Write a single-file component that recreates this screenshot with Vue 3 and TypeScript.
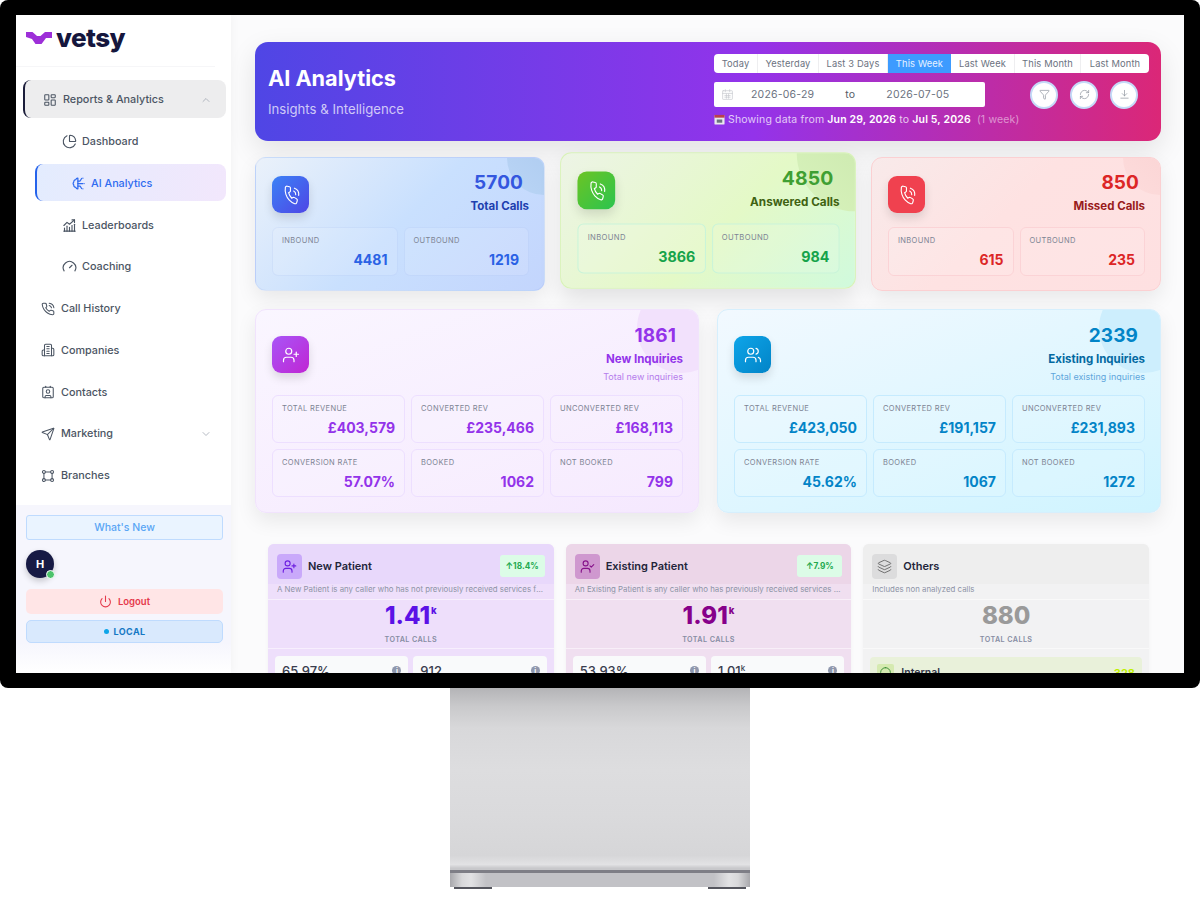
<script setup lang="ts">
import { h } from 'vue'

const paths: Record<string, string[]> = {
  grid: ['M4 3h5a1 1 0 0 1 1 1v7a1 1 0 0 1-1 1H4a1 1 0 0 1-1-1V4a1 1 0 0 1 1-1z', 'M15 3h5a1 1 0 0 1 1 1v3a1 1 0 0 1-1 1h-5a1 1 0 0 1-1-1V4a1 1 0 0 1 1-1z', 'M15 12h5a1 1 0 0 1 1 1v7a1 1 0 0 1-1 1h-5a1 1 0 0 1-1-1v-7a1 1 0 0 1 1-1z', 'M4 16h5a1 1 0 0 1 1 1v3a1 1 0 0 1-1 1H4a1 1 0 0 1-1-1v-3a1 1 0 0 1 1-1z'],
  pie: ['M21 12c.552 0 1.005-.449.95-.998a10 10 0 0 0-8.953-8.951c-.55-.055-.998.398-.998.95v8a1 1 0 0 0 1 1z', 'M21.21 15.89A10 10 0 1 1 8 2.83'],
  brain: ['M11 3.5a3 3 0 0 0-3.2 2.3A3.2 3.2 0 0 0 4.5 9.5a3.4 3.4 0 0 0 0 5 3.2 3.2 0 0 0 3.3 3.7A3 3 0 0 0 11 20.5z', 'M11 8h3.5l2.5-4', 'M11 12h8', 'M11 16h3.5l2.5 4', 'M19 3.5h.01', 'M21 12h.01', 'M19 20.5h.01'],
  chart: ['M3 21h18', 'M4 21v-5', 'M8 21v-8', 'M12 21v-6', 'M16 21v-9', 'M20 21V10', 'M3 12l5-5 4 3 8-7', 'M16 3h4v4'],
  gauge: ['m12 14 4-4', 'M3.34 19a10 10 0 1 1 17.32 0'],
  phone: ['M14.05 2a9 9 0 0 1 8 7.94', 'M14.05 6A5 5 0 0 1 18 10', 'M22 16.92v3a2 2 0 0 1-2.18 2 19.79 19.79 0 0 1-8.63-3.07 19.5 19.5 0 0 1-6-6 19.79 19.79 0 0 1-3.07-8.67A2 2 0 0 1 4.11 2h3a2 2 0 0 1 2 1.72 12.84 12.84 0 0 0 .7 2.81 2 2 0 0 1-.45 2.11L8.09 9.91a16 16 0 0 0 6 6l1.27-1.27a2 2 0 0 1 2.11-.45 12.84 12.84 0 0 0 2.81.7A2 2 0 0 1 22 16.92z'],
  building: ['M6 22V4a2 2 0 0 1 2-2h8a2 2 0 0 1 2 2v18z', 'M6 12H4a2 2 0 0 0-2 2v6a2 2 0 0 0 2 2h2', 'M18 9h2a2 2 0 0 1 2 2v9a2 2 0 0 1-2 2h-2', 'M10 6h4', 'M10 10h4', 'M10 14h4', 'M10 18h4'],
  contact: ['M16 2v2', 'M8 2v2', 'M7 22v-2a2 2 0 0 1 2-2h6a2 2 0 0 1 2 2v2', 'M12 8a3 3 0 1 1 0 6 3 3 0 0 1 0-6z', 'M5 4h14a2 2 0 0 1 2 2v14a2 2 0 0 1-2 2H5a2 2 0 0 1-2-2V6a2 2 0 0 1 2-2z'],
  send: ['M14.536 21.686a.5.5 0 0 0 .937-.024l6.5-19a.496.496 0 0 0-.635-.635l-19 6.5a.5.5 0 0 0-.024.937l7.93 3.18a2 2 0 0 1 1.112 1.11z', 'm21.854 2.147-10.94 10.939'],
  branch: ['M5 2.5a2.5 2.5 0 1 1 0 5 2.5 2.5 0 0 1 0-5z', 'M19 2.5a2.5 2.5 0 1 1 0 5 2.5 2.5 0 0 1 0-5z', 'M5 16.5a2.5 2.5 0 1 1 0 5 2.5 2.5 0 0 1 0-5z', 'M19 16.5a2.5 2.5 0 1 1 0 5 2.5 2.5 0 0 1 0-5z', 'M7.5 5h9', 'M7.5 19h9', 'M5 7.5v9', 'M19 7.5v9'],
  up: ['m6 15 6-6 6 6'],
  down: ['m6 9 6 6 6-6'],
  power: ['M12 2v10', 'M18.4 6.6a9 9 0 1 1-12.77.04'],
  filter: ['M10 20a1 1 0 0 0 .553.895l2 1A1 1 0 0 0 14 21v-7a2 2 0 0 1 .517-1.341L21.74 4.67A1 1 0 0 0 21 3H3a1 1 0 0 0-.742 1.67l7.225 7.989A2 2 0 0 1 10 14z'],
  refresh: ['M3 12a9 9 0 0 1 9-9 9.75 9.75 0 0 1 6.74 2.74L21 8', 'M21 3v5h-5', 'M21 12a9 9 0 0 1-9 9 9.75 9.75 0 0 1-6.74-2.74L3 16', 'M8 16H3v5'],
  download: ['M12 3v12', 'm7 10 5 5 5-5', 'M4 20h16'],
  userplus: ['M16 21v-2a4 4 0 0 0-4-4H6a4 4 0 0 0-4 4v2', 'M9 3a4 4 0 1 1 0 8 4 4 0 0 1 0-8z', 'M19 8v6', 'M22 11h-6'],
  users: ['M16 21v-2a4 4 0 0 0-4-4H6a4 4 0 0 0-4 4v2', 'M9 3a4 4 0 1 1 0 8 4 4 0 0 1 0-8z', 'M22 21v-2a4 4 0 0 0-3-3.87', 'M16 3.13a4 4 0 0 1 0 7.75'],
  usercheck: ['M16 21v-2a4 4 0 0 0-4-4H6a4 4 0 0 0-4 4v2', 'M9 3a4 4 0 1 1 0 8 4 4 0 0 1 0-8z', 'm16 11 2 2 4-4'],
  layers: ['M12.83 2.18a2 2 0 0 0-1.66 0L2.6 6.08a1 1 0 0 0 0 1.83l8.58 3.91a2 2 0 0 0 1.66 0l8.58-3.9a1 1 0 0 0 0-1.83z', 'M2 12a1 1 0 0 0 .58.91l8.6 3.91a2 2 0 0 0 1.65 0l8.58-3.9A1 1 0 0 0 22 12', 'M2 17a1 1 0 0 0 .58.91l8.6 3.91a2 2 0 0 0 1.65 0l8.58-3.9A1 1 0 0 0 22 17'],
  circle: ['M12 3a9 9 0 1 1 0 18 9 9 0 0 1 0-18z'],
  calendar: ['M4 5h16a1 1 0 0 1 1 1v14a1 1 0 0 1-1 1H4a1 1 0 0 1-1-1V6a1 1 0 0 1 1-1z', 'M3 10h18', 'M8 3v4', 'M16 3v4', 'M7 14h10', 'M7 17h10', 'M10 11v8', 'M14 11v8'],
}

const Ico = (props: { n: string; s: number; w?: number }) =>
  h(
    'svg',
    {
      viewBox: '0 0 24 24',
      width: props.s,
      height: props.s,
      fill: 'none',
      stroke: 'currentColor',
      'stroke-width': props.w ?? 2,
      'stroke-linecap': 'round',
      'stroke-linejoin': 'round',
    },
    paths[props.n].map((d) => h('path', { d })),
  )
Ico.props = ['n', 's', 'w']

const subNav = [
  { label: 'Dashboard', icon: 'pie' },
  { label: 'AI Analytics', icon: 'brain', active: true },
  { label: 'Leaderboards', icon: 'chart' },
  { label: 'Coaching', icon: 'gauge' },
]
const topNav = [
  { label: 'Call History', icon: 'phone' },
  { label: 'Companies', icon: 'building' },
  { label: 'Contacts', icon: 'contact' },
  { label: 'Marketing', icon: 'send', more: true },
  { label: 'Branches', icon: 'branch' },
]
const tabs = ['Today', 'Yesterday', 'Last 3 Days', 'This Week', 'Last Week', 'This Month', 'Last Month']
const callCards = [
  { tone: 'blue', num: '5700', label: 'Total Calls', inb: '4481', out: '1219' },
  { tone: 'green', num: '4850', label: 'Answered Calls', inb: '3866', out: '984' },
  { tone: 'red', num: '850', label: 'Missed Calls', inb: '615', out: '235' },
]
const inquiryCards = [
  {
    tone: 'purple', icon: 'userplus', num: '1861', label: 'New Inquiries', sub: 'Total new inquiries',
    metrics: [['Total Revenue', '£403,579'], ['Converted Rev', '£235,466'], ['Unconverted Rev', '£168,113'], ['Conversion Rate', '57.07%'], ['Booked', '1062'], ['Not Booked', '799']],
  },
  {
    tone: 'sky', icon: 'users', num: '2339', label: 'Existing Inquiries', sub: 'Total existing inquiries',
    metrics: [['Total Revenue', '£423,050'], ['Converted Rev', '£191,157'], ['Unconverted Rev', '£231,893'], ['Conversion Rate', '45.62%'], ['Booked', '1067'], ['Not Booked', '1272']],
  },
]
const patients = [
  { tone: 'violet', icon: 'userplus', title: 'New Patient', badge: '18.4%', desc: 'A New Patient is any caller who has not previously received services from this practice', big: '1.41', unit: 'k', a: '65.97%', b: '912', bUnit: '' },
  { tone: 'plum', icon: 'usercheck', title: 'Existing Patient', badge: '7.9%', desc: 'An Existing Patient is any caller who has previously received services from this practice', big: '1.91', unit: 'k', a: '53.93%', b: '1.01', bUnit: 'k' },
]
</script>

<template>
  <div class="page">
    <div class="monitor">
      <div class="screen">
        <aside class="sidebar">
          <div class="logo">
            <svg class="mark" viewBox="0 0 26 14" width="26" height="14">
              <path d="M0 1H6.500L11 5H14.500L19 1H26V7H20L15.500 13H9.500L6 8L0 6Z" fill="#9d2fd8" />
            </svg>
            <span class="word">vetsy</span>
          </div>
          <nav class="nav">
            <div class="item group">
              <Ico n="grid" :s="14" :w="1.8" />
              <span class="grow">Reports &amp; Analytics</span>
              <Ico class="chev" n="up" :s="12" :w="1.5" />
            </div>
            <div v-for="s in subNav" :key="s.label" class="item sub" :class="{ active: s.active }">
              <Ico :n="s.icon" :s="15" :w="s.active ? 2 : 1.8" />
              <span>{{ s.label }}</span>
            </div>
            <div v-for="t in topNav" :key="t.label" class="item top">
              <Ico :n="t.icon" :s="14" :w="1.8" />
              <span class="grow">{{ t.label }}</span>
              <Ico v-if="t.more" class="chev" n="down" :s="12" :w="1.5" />
            </div>
          </nav>
          <div class="foot">
            <div class="whats">What's New</div>
            <div class="avatar">H<i class="online"></i></div>
            <div class="logout"><Ico n="power" :s="13" />Logout</div>
            <div class="local"><i class="dot"></i>LOCAL</div>
          </div>
        </aside>

        <main class="main">
          <section class="hero">
            <div class="hero-left">
              <h1>AI Analytics</h1>
              <p>Insights &amp; Intelligence</p>
            </div>
            <div class="hero-right">
              <div class="tabs">
                <span v-for="t in tabs" :key="t" class="tab" :class="{ on: t === 'This Week' }">{{ t }}</span>
              </div>
              <div class="controls">
                <div class="range">
                  <Ico class="cal" n="calendar" :s="13" :w="1.2" />
                  <span class="d1">2026-06-29</span>
                  <span class="to">to</span>
                  <span class="d2">2026-07-05</span>
                </div>
                <div class="round"><Ico n="filter" :s="11" :w="1.5" /></div>
                <div class="round"><Ico n="refresh" :s="11" :w="1.5" /></div>
                <div class="round"><Ico n="download" :s="11" :w="1.5" /></div>
              </div>
              <div class="showing">
                <svg class="emoji" viewBox="0 0 12 12" width="11" height="11">
                  <rect x="0.500" y="1" width="11" height="10.500" rx="1" fill="#e8e8ec" />
                  <rect x="0.500" y="1" width="11" height="3" fill="#b9414d" />
                  <rect x="3" y="6" width="6" height="3.500" fill="#6b7280" />
                </svg>
                Showing data from <b>Jun 29, 2026</b> to <b>Jul 5, 2026</b> <span class="wk">(1 week)</span>
              </div>
            </div>
          </section>

          <section class="row-calls">
            <article v-for="c in callCards" :key="c.tone" class="stat" :class="c.tone">
              <i class="blob"></i>
              <div class="head">
                <div class="ic"><Ico n="phone" :s="18" :w="1.5" class="tilt" /></div>
                <div class="titles">
                  <div class="num">{{ c.num }}</div>
                  <div class="lab">{{ c.label }}</div>
                </div>
              </div>
              <div class="pair">
                <div class="cell"><div class="k">Inbound</div><div class="v">{{ c.inb }}</div></div>
                <div class="cell"><div class="k">Outbound</div><div class="v">{{ c.out }}</div></div>
              </div>
            </article>
          </section>

          <section class="row-inq">
            <article v-for="c in inquiryCards" :key="c.tone" class="stat big" :class="c.tone">
              <i class="blob"></i>
              <div class="head">
                <div class="ic"><Ico :n="c.icon" :s="18" :w="1.6" /></div>
                <div class="titles">
                  <div class="num">{{ c.num }}</div>
                  <div class="lab">{{ c.label }}</div>
                  <div class="desc">{{ c.sub }}</div>
                </div>
              </div>
              <div class="six">
                <div v-for="m in c.metrics" :key="m[0]" class="cell"><div class="k">{{ m[0] }}</div><div class="v">{{ m[1] }}</div></div>
              </div>
            </article>
          </section>

          <section class="row-pat">
            <article v-for="p in patients" :key="p.title" class="pat" :class="p.tone">
              <header class="ph">
                <div class="pi"><Ico :n="p.icon" :s="15" :w="1.8" /></div>
                <span class="pt">{{ p.title }}</span>
                <span class="badge">↑{{ p.badge }}</span>
              </header>
              <div class="pd">{{ p.desc }}</div>
              <div class="pn"><span class="bn">{{ p.big }}<sup>{{ p.unit }}</sup></span><span class="tc">TOTAL CALLS</span></div>
              <div class="ps">
                <div class="pc"><span>{{ p.a }}</span><i class="info">i</i></div>
                <div class="pc"><span>{{ p.b }}<sup v-if="p.bUnit">{{ p.bUnit }}</sup></span><i class="info">i</i></div>
              </div>
            </article>
            <article class="pat gray">
              <header class="ph">
                <div class="pi"><Ico n="layers" :s="15" :w="1.5" /></div>
                <span class="pt">Others</span>
              </header>
              <div class="pd">Includes non analyzed calls</div>
              <div class="pn"><span class="bn">880</span><span class="tc">TOTAL CALLS</span></div>
              <div class="internal">
                <div class="ii"><Ico n="circle" :s="13" :w="1.8" /></div>
                <span class="in">Internal</span>
                <span class="iv">328</span>
              </div>
            </article>
          </section>
        </main>
      </div>
    </div>
    <div class="stand">
      <div class="neck"></div>
      <div class="base"></div>
      <div class="feet"><i></i><i></i></div>
    </div>
  </div>
</template>

<style>
html, body { margin: 0; background: #fff; }
</style>

<style scoped>
* { box-sizing: border-box; }
.page { width: 1200px; height: 901px; background: #fff; display: flex; flex-direction: column; align-items: center; font-family: Inter, "Liberation Sans", sans-serif; overflow: hidden; }
.monitor { width: 1200px; height: 688px; background: #000; border-radius: 8px; padding: 15px 16px; flex: none; }
.screen { width: 1168px; height: 658px; display: flex; overflow: hidden; background: #fbfbfc; }

/* stand */
.stand { width: 300px; height: 201px; display: flex; flex-direction: column; flex: none; }
.neck { height: 182px; background: linear-gradient(180deg, #b4b4b7 0%, #c9c9cb 10%, #d8d8da 22%, #dddddf 45%, #dadadc 70%, #d6d6d8 92%, #e2e2e4 97%, #c8c8cb 99%); }
.base { height: 17px; border-top: 3px solid #7e7e86; background: linear-gradient(90deg, #a8a8ac 0%, #d8d8da 4%, #e2e2e4 7%, #c2c2c6 12%, #c2c2c6 88%, #e2e2e4 93%, #d8d8da 96%, #a8a8ac 100%); }
.feet { height: 2px; display: flex; justify-content: space-between; padding: 0 4px; }
.feet i { width: 38px; background: #55565e; }

/* sidebar */
.sidebar { width: 215px; flex: none; background: #fff; display: flex; flex-direction: column; box-shadow: 2px 0 8px rgba(0, 0, 0, .03); }
.logo { height: 52px; margin-bottom: 13px; margin-right: 16px; display: flex; align-items: center; gap: 4px; padding: 0 0 6px 10px; border-bottom: 1px solid #f6f6f8; }
.word { font-size: 26px; font-weight: 800; letter-spacing: -.6px; color: #15163d; line-height: 1; }
.nav { display: flex; flex-direction: column; gap: 4px; padding: 0 5px 0 7px; }
.item { height: 37.75px; padding-top: 2px; display: flex; align-items: center; gap: 6px; font-size: 10.8px; font-weight: 500; color: #4b5563; border-radius: 8px; flex: none; }
.grow { flex: 1; }
.chev { color: #9ca3af; margin-right: 14px; }
.group { padding-left: 18px; gap: 6px; background: #ededee; border-left: 2px solid #1b1d3a; }
.sub { margin-left: 12px; padding-left: 27px; gap: 5px; }
.sub.active { padding-left: 34px; gap: 5px; color: #2f6bf0; background: linear-gradient(100deg, #e3ecfe, #f2e7fc); border-left: 2px solid #2563eb; }
.top { padding-left: 18px; }
.foot { margin-top: auto; height: 168px; padding: 10px 8px 0 10px; display: flex; flex-direction: column; background: linear-gradient(180deg, #f6f6fd 0%, #f6f6fd 82%, #fff 100%); }
.whats { height: 25px; background: #eaf4ff; border: 1px solid #bfdbfe; border-radius: 3px; display: flex; align-items: center; justify-content: center; font-size: 10.500px; font-weight: 500; color: #5aa6f5; flex: none; }
.avatar { width: 28px; height: 28px; margin-top: 10px; border-radius: 50%; background: #171a44; color: #fff; font-size: 11px; font-weight: 700; display: flex; align-items: center; justify-content: center; position: relative; box-shadow: 0 3px 6px rgba(0, 0, 0, .2); flex: none; }
.online { position: absolute; right: -1px; bottom: -1px; width: 9px; height: 9px; border-radius: 50%; background: #4cc36b; border: 1.5px solid #fff; }
.logout { height: 25px; margin-top: 11px; border-radius: 5px; background: #ffe5e6; color: #e5394b; display: flex; align-items: center; justify-content: center; gap: 6px; font-size: 9.500px; font-weight: 600; flex: none; }
.local { height: 23px; margin-top: 6px; border-radius: 5px; background: #d9e9fd; border: 1px solid #bfdbfe; color: #1477c4; display: flex; align-items: center; justify-content: center; gap: 5px; font-size: 9px; font-weight: 700; letter-spacing: .4px; flex: none; }
.dot { width: 5px; height: 5px; border-radius: 50%; background: #0ea5e9; }

/* main */
.main { flex: 1; min-width: 0; padding: 27px 23px 0 24px; display: flex; flex-direction: column; overflow: hidden; }
.hero { height: 99px; flex: none; border-radius: 13px; background: linear-gradient(90deg, #4f46e5 0%, #9333ea 55%, #db2777 100%); box-shadow: 0 10px 28px rgba(0, 0, 0, .1); display: flex; justify-content: space-between; padding: 12px 12px 0 13px; color: #fff; }
h1 { margin: 10px 0 0; font-size: 21.7px; line-height: 28px; font-weight: 700; }
.hero-left p { margin: 8px 0 0; font-size: 13.200px; line-height: 18px; color: rgba(255, 255, 255, .72); }
.hero-right { width: 435px; display: flex; flex-direction: column; }
.tabs { height: 19px; display: grid; grid-template-columns: 44px 61px 69px 63px 64px 66px 68px; background: #fff; border-radius: 4px; overflow: hidden; }
.tab { display: flex; align-items: center; justify-content: center; font-size: 9.300px; letter-spacing: .15px; color: #6b7280; border-right: 1px solid #eeeef0; white-space: nowrap; }
.tab:last-child { border-right: 0; }
.tab.on { background: #3d9bff; color: #e8f3ff; border-right: 0; }
.controls { display: flex; align-items: center; margin-top: 9px; height: 25px; }
.range { width: 271px; height: 25px; background: #fff; border-radius: 2px; display: flex; align-items: center; font-size: 10.500px; letter-spacing: .2px; color: #6b7280; padding-left: 7px; margin-right: 45px; flex: none; }
.cal { color: #c4c6cc; }
.d1 { margin-left: 17px; }
.to { margin-left: 31px; color: #555b66; }
.d2 { margin-left: 31px; }
.round { width: 28px; height: 28px; border-radius: 50%; background: #fff; border: 2px solid #c5daf8; color: #8c929c; display: flex; align-items: center; justify-content: center; margin-right: 12px; flex: none; }
.showing { margin-top: 6px; font-size: 10.500px; line-height: 14px; color: rgba(255, 255, 255, .75); white-space: pre-wrap; letter-spacing: .15px; }
.showing b { color: #fff; font-weight: 600; }
.emoji { vertical-align: -2px; }
.wk { margin-left: 3px; color: rgba(255, 255, 255, .5); }

.row-calls { display: grid; grid-template-columns: repeat(3, 1fr); gap: 18px; margin-top: 16px; flex: none; }
.row-inq { display: grid; grid-template-columns: 1fr 1fr; gap: 18px; margin-top: 18px; flex: none; }
.stat { position: relative; overflow: hidden; isolation: isolate; border-radius: 11px; padding: 15px 15px 14px 16px; border: 1px solid transparent; box-shadow: 0 8px 20px rgba(0, 0, 0, .08); }
.blob { position: absolute; top: -37px; right: -37px; width: 74px; height: 74px; border-radius: 50%; z-index: -1; }
.green .blob { top: -57px; right: -57px; width: 114px; height: 114px; }
.big .blob { top: -27px; right: -29px; width: 90px; height: 90px; }
.head { display: flex; justify-content: space-between; align-items: flex-start; margin-bottom: 14px; }
.ic { width: 37px; height: 37px; border-radius: 9px; display: flex; align-items: center; justify-content: center; color: #fff; margin-top: 3px; box-shadow: 0 5px 10px rgba(0, 0, 0, .12); flex: none; }
.tilt { transform: rotate(15deg); }
.titles { text-align: right; }
.num { font-size: 19px; line-height: 20px; font-weight: 700; padding-right: 6px; letter-spacing: .1px; }
.lab { margin-top: 6px; font-size: 11.500px; line-height: 14px; font-weight: 700; }
.desc { margin-top: 5px; font-size: 9px; line-height: 12px; }
.pair { display: grid; grid-template-columns: 1fr 1fr; gap: 6px; }
.cell { height: 49px; border: 1.5px solid; border-radius: 6px; padding: 7px 9px 0; background: rgba(255, 255, 255, .12); }
.k { font-size: 7.500px; line-height: 11px; letter-spacing: .35px; color: #7d8494; text-transform: uppercase; }
.v { margin-top: 5px; text-align: right; font-size: 14px; line-height: 18px; font-weight: 700; }
.big { padding-top: 16px; padding-bottom: 15px; }
.big .num { padding-right: 7px; }
.big .head { margin-bottom: 12px; }
.big .ic { margin-top: 10px; }
.big .cell { height: 48px; }
.six { display: grid; grid-template-columns: repeat(3, 1fr); gap: 6px; }

.blue { background: linear-gradient(135deg, #eaf1fa 0%, #c9e0fe 50%, #c3d5fd 100%); border-color: rgba(120, 150, 220, .12); }
.blue .blob { background: linear-gradient(45deg, #bad5f6, #a8c7ec); }
.blue .ic { background: linear-gradient(135deg, #3b82f6, #4f46e5); }
.blue .num { color: #3457df; }
.blue .lab { color: #1e40af; }
.blue .v { color: #2a62e5; }
.blue .cell { border-color: rgba(100, 140, 230, .1); }
.green { background: linear-gradient(135deg, #edf4e6 0%, #e4f9c7 55%, #d0fadd 100%); border-color: #d8f2b8; transform: translateY(-3.5px) scale(1.02); box-shadow: 0 10px 22px rgba(0, 0, 0, .1); }
.green .blob { background: linear-gradient(45deg, #d8f3bc, #c6e3a8); }
.green .ic { background: linear-gradient(135deg, #6cc424, #2bc44f); }
.green .num { color: #3f9f33; }
.green .lab { color: #3f6212; }
.green .v { color: #16a34a; }
.green .cell { border-color: #c9f4d9; }
.red { background: linear-gradient(135deg, #f8eaea 0%, #fee2e2 45%, #fee0e1 100%); border-color: #fbd0d2; }
.red .blob { background: linear-gradient(45deg, #fddcdc, #f9d0d0); }
.red .ic { background: #f0414f; }
.red .num { color: #dc2626; }
.red .lab { color: #991b1b; }
.red .v { color: #dc2626; }
.red .cell { border-color: #fbd3d6; }
.purple { background: linear-gradient(160deg, #faf6ff 0%, #f5e8fe 100%); border-color: #f1e3fd; }
.purple .blob { background: #f2e1fc; }
.purple .ic { background: linear-gradient(135deg, #a855f7, #c026d3); }
.purple .num, .purple .lab, .purple .v { color: #9333ea; }
.purple .desc { color: #b57cec; }
.purple .cell { border-color: #eddfff; }
.sky { background: linear-gradient(160deg, #f2f9ff 0%, #cff4ff 100%); border-color: #d6effd; }
.sky .blob { background: #cdeefd; }
.sky .ic { background: linear-gradient(135deg, #0ea5e9, #0284c7); }
.sky .num, .sky .v { color: #0284c7; }
.sky .lab { color: #0369a1; }
.sky .desc { color: #5fa6dc; }
.sky .cell { border-color: #c6ebfe; }

.row-pat { display: grid; grid-template-columns: repeat(3, 1fr); gap: 12px; margin: 31px 12px 0 13px; flex: none; }
.pat { border-radius: 6px; height: 180px; box-shadow: 0 1px 4px rgba(0, 0, 0, .04); overflow: hidden; }
.ph { height: 40px; display: flex; align-items: center; padding: 4px 9px 0; gap: 6px; }
.pi { width: 25px; height: 25px; border-radius: 4px; display: flex; align-items: center; justify-content: center; flex: none; }
.pt { flex: 1; font-size: 11px; font-weight: 600; color: #23253a; }
.badge { width: 45px; height: 22px; border-radius: 3px; background: #dcfce7; color: #22a94f; font-size: 8.300px; font-weight: 700; display: flex; align-items: center; justify-content: center; }
.pd { height: 16px; padding: 0 9px; font-size: 7.850px; line-height: 11px; color: #8d93a6; white-space: nowrap; overflow: hidden; text-overflow: ellipsis; border-bottom: 1px solid rgba(255, 255, 255, .5); }
.pn { height: 49px; display: flex; flex-direction: column; align-items: center; border-bottom: 1px solid rgba(255, 255, 255, .5); }
.bn { font-size: 24px; line-height: 28px; font-weight: 800; margin-top: 2px; }
.bn sup { font-size: 9.500px; line-height: 0; vertical-align: 10px; margin-left: 1px; }
.tc { margin-top: 4px; font-size: 7.200px; line-height: 11px; font-weight: 600; letter-spacing: .4px; color: #878da3; }
.ps { display: grid; grid-template-columns: 1fr 1fr; gap: 5px; padding: 7px 7px 0; }
.pc { height: 40px; background: #f9fafb; border-radius: 4px; padding: 7px; display: flex; justify-content: space-between; font-size: 13px; line-height: 16px; font-weight: 500; color: #3a3d4e; }
.pc sup { font-size: 8px; line-height: 0; }
.info { width: 9px; height: 9px; margin-top: 3px; border-radius: 50%; background: #8f97ad; color: #fff; font-size: 7px; line-height: 9px; text-align: center; font-style: normal; font-weight: 700; }
.violet { background: #eedffb; }
.violet .ph { background: #e8d8fb; }
.violet .pi { background: #c9a9fa; color: #6d1fe0; }
.violet .bn { color: #5b11e6; }
.plum { background: #f0dff0; }
.plum .ph { background: #ecd6e8; }
.plum .pi { background: #cf98cf; color: #86128a; }
.plum .bn { color: #86008a; }
.gray { background: #f2f2f3; }
.gray .ph { background: #eeeeee; }
.gray .pi { background: #dcdcdd; color: #6b6b6b; }
.gray .bn { color: #9a9a9a; }
.internal { margin: 8px 7px 0; height: 40px; background: #e9f1da; border-radius: 4px; display: flex; padding: 7px; gap: 7px; }
.ii { width: 17px; height: 17px; display: flex; align-items: center; justify-content: center; background: #d5eab0; color: #3f8f3a; border-radius: 2px; flex: none; }
.in { flex: 1; margin-top: 2px; font-size: 10.500px; font-weight: 600; color: #33374a; line-height: 14px; }
.iv { margin-top: 2px; font-size: 11px; font-weight: 700; color: #bef000; line-height: 14px; }
</style>
